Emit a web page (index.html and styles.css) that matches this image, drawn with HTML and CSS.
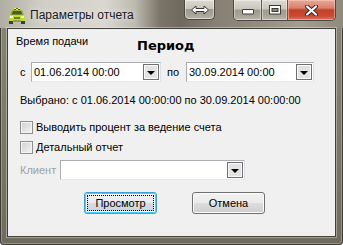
FILE: index.html
```html
<!DOCTYPE html>
<html>
<head>
  <meta charset="utf-8">
  <title>Параметры отчета</title>
  <link rel="stylesheet" href="styles.css">
</head>
<body>

<div class="window">
  <div class="titlebar">
    <svg class="app-icon" width="18" height="16" viewBox="0 0 18 16">
      <rect x="6" y="0" width="6" height="2" fill="#5b5f3a"/>
      <rect x="6" y="0" width="2" height="1" fill="#e8f06a"/>
      <rect x="10" y="0" width="2" height="1" fill="#e8f06a"/>
      <rect x="8" y="1" width="2" height="1" fill="#e8f06a"/>
      <path d="M4 2 H14 L16 7 H2 Z" fill="#9bb52a"/>
      <path d="M5 3 H13 L14.5 6.5 H3.5 Z" fill="#4e5a2c"/>
      <path d="M1 7 H17 V13 H1 Z" fill="#bedc32"/>
      <rect x="2" y="8" width="3" height="2" fill="#f4f8c8"/>
      <rect x="13" y="8" width="3" height="2" fill="#f4f8c8"/>
      <rect x="6" y="9" width="6" height="2" fill="#6e7d2a"/>
      <rect x="1" y="13" width="4" height="3" fill="#3a3d30"/>
      <rect x="13" y="13" width="4" height="3" fill="#3a3d30"/>
      <rect x="5" y="12" width="8" height="2" fill="#8ea62a"/>
    </svg>
    <span class="title">Параметры отчета</span>
    <div class="cap cap-extra">
      <svg width="20" height="10" viewBox="0 0 20 10">
        <path d="M1.5 5 L6 1 V3.5 H14 V1 L18.5 5 L14 9 V6.5 H6 V9 Z" fill="#fff" stroke="#3b3a36" stroke-width="1" stroke-linejoin="round"/>
      </svg>
    </div>
    <div class="cap-group">
      <div class="cap cap-min">
        <svg width="12" height="6" viewBox="0 0 12 6">
          <rect x="0.5" y="0.5" width="11" height="4.5" rx="0.5" fill="#fff" stroke="#3b3a36"/>
        </svg>
      </div>
      <div class="cap cap-max">
        <svg width="12" height="10" viewBox="0 0 12 10">
          <rect x="0.5" y="0.5" width="11" height="8.5" fill="#fff" stroke="#3b3a36"/>
          <rect x="3" y="3.5" width="6" height="3" fill="#8d8a80" stroke="#3b3a36"/>
        </svg>
      </div>
      <div class="cap cap-close">
        <svg width="13" height="11" viewBox="0 0 13 11">
          <path d="M2 1.5 L11 9.5 M11 1.5 L2 9.5" stroke="#3b2a26" stroke-width="4.2" stroke-linecap="round"/>
          <path d="M2 1.5 L11 9.5 M11 1.5 L2 9.5" stroke="#fff" stroke-width="2.2" stroke-linecap="round"/>
        </svg>
      </div>
    </div>
  </div>

  <div class="client">
    <div class="head">
      <span class="time-label">Время подачи</span>
      <span class="period">Период</span>
    </div>

    <div class="dates">
      <span class="lbl-from">с</span>
      <div class="combo date1"><span class="combo-text">01.06.2014 00:00</span><span class="drop"></span></div>
      <span class="lbl-to">по</span>
      <div class="combo date2"><span class="combo-text">30.09.2014 00:00</span><span class="drop"></span></div>
    </div>

    <div class="chosen">Выбрано: с 01.06.2014 00:00:00 по 30.09.2014 00:00:00</div>

    <label class="check"><span class="box"></span>Выводить процент за ведение счета</label>
    <label class="check check2"><span class="box"></span>Детальный отчет</label>

    <div class="client-row">
      <span class="lbl-client">Клиент</span>
      <div class="combo client-combo"><span class="combo-text"></span><span class="drop"></span></div>
    </div>

    <div class="buttons">
      <button class="btn btn-default"><span class="focus">Просмотр</span></button>
      <button class="btn">Отмена</button>
    </div>
  </div>
</div>

</body>
</html>
```

FILE: styles.css
```css
body { margin: 0; background: #fff; font-family: "Liberation Sans", Arial, sans-serif; font-size: 11px; color: #000; }

.window { width: 343px; height: 245px; box-sizing: border-box; padding-bottom: 8px;
  background: linear-gradient(#8a8677, #6f6b5d);
  box-shadow: inset 0 0 0 1px #3e3c35, inset 0 0 0 2px rgba(255,255,255,.25); border-radius: 0 0 4px 4px; }

/* title bar */
.titlebar { display: flex; align-items: flex-start; height: 28px;
  background: linear-gradient(90deg, #b0ada2 0, #cfcdc5 40px, #d9d7cf 105px, #bdbab0 135px, #7a7568 160px, #6f6a5e 180px, #858072 215px, #8f8a7c 250px, #a29e91 300px, #8e8a7c 343px); }
.app-icon { margin: 8px 0 0 8px; flex: none; }
.title { margin: 8px 0 0 4px; font-size: 12px; line-height: 14px; color: #1b1b1b; text-shadow: 0 0 6px rgba(255,255,255,.9); }

.cap { height: 20px; box-sizing: border-box; display: flex; align-items: center; justify-content: center;
  background: linear-gradient(#dcdad2 0, #c9c6bc 45%, #9e9a8d 50%, #a9a598 80%, #bab6aa 100%); }
.cap-extra { width: 31px; margin-left: auto; margin-right: 18px; border: 1px solid #4a4840; border-top: none; border-radius: 0 0 5px 5px;
  box-shadow: inset 0 0 0 1px rgba(255,255,255,.45); }
.cap-group { display: flex; margin-right: 7px; border: 1px solid #4a4840; border-top: none; border-radius: 0 0 5px 5px; overflow: hidden; }
.cap-min { width: 28px; border-right: 1px solid #5a574e; box-shadow: inset 0 0 0 1px rgba(255,255,255,.4); }
.cap-max { width: 26px; border-right: 1px solid #5a574e; box-shadow: inset 0 0 0 1px rgba(255,255,255,.4); }
.cap-close { width: 47px; background: linear-gradient(#e7a999 0, #d9806b 40%, #c2402b 50%, #c94a33 80%, #d9775d 100%);
  box-shadow: inset 0 0 0 1px rgba(255,220,210,.45); }
.cap-min svg { margin-top: 3px; }

/* client area */
.client { height: 209px; margin: 0 7px; box-sizing: border-box; border: 1px solid #3f3e38; background: #f0f0f0;
  box-shadow: 0 0 0 1px rgba(255,255,255,.35); }

.head { display: flex; align-items: flex-start; padding: 6px 0 0 8px; line-height: 13px; }
.time-label { width: 121px; flex: none; }
.period { margin-top: 3px; font-family: "DejaVu Sans", sans-serif; font-weight: bold; font-size: 13px; line-height: 16px; }

.dates { display: flex; align-items: center; margin-top: 8px; padding-left: 12px; }
.lbl-from { width: 11px; }
.lbl-to { width: 19px; margin-left: 6px; }

.combo { height: 20px; box-sizing: border-box; border: 1px solid #abadb3; border-right-color: #dbdfe6; border-bottom-color: #e3e9ef;
  background: #fff; display: flex; align-items: center; padding: 0 1px 0 2px; }
.combo-text { flex: 1; line-height: 13px; }
.date1 { width: 130px; }
.date2 { width: 128px; }
.drop { width: 16px; height: 16px; box-sizing: border-box; border: 1px solid #6f6f6f; background: #e3e3e3;
  box-shadow: inset 0 0 0 1px #fafafa; display: flex; align-items: center; justify-content: center; }
.drop::after { content: ""; border-left: 4px solid transparent; border-right: 4px solid transparent; border-top: 4px solid #000; margin-top: 1px; }

.chosen { margin-top: 12px; padding-left: 12px; line-height: 13px; }

.check { display: flex; align-items: center; margin-top: 14px; padding-left: 12px; height: 13px; line-height: 13px; }
.check2 { margin-top: 7px; }
.box { width: 13px; height: 13px; box-sizing: border-box; margin-right: 3px; border: 1px solid #8e8f8f;
  background: linear-gradient(135deg, #cdd0d4, #f4f4f4); box-shadow: inset 0 0 0 1px #f4f4f4; }

.client-row { display: flex; align-items: center; margin-top: 6px; padding-left: 12px; }
.lbl-client { width: 40px; color: #a0a0a0; }
.client-combo { width: 185px; }

.buttons { display: flex; gap: 35px; margin-top: 12px; padding-left: 76px; }
.btn { width: 73px; height: 22px; box-sizing: border-box; border: 1px solid #707070; border-radius: 3px; padding: 0;
  font: 11px "Liberation Sans", Arial, sans-serif; color: #000;
  background: linear-gradient(#f2f2f2 0, #ebebeb 50%, #dddddd 51%, #cfcfcf 100%); box-shadow: inset 0 0 0 1px #fcfcfc; }
.btn-default { border-color: #3c9fd8; box-shadow: inset 0 0 0 1px #48d0f8, inset 0 0 0 2px #fff;
  background: linear-gradient(#f0f3f6 0, #e6ebef 50%, #d4dde4 51%, #c8d4dc 100%); padding: 2px; }
.focus { display: flex; align-items: center; justify-content: center; height: 100%; box-sizing: border-box; border: 1px dotted #000; }
```
